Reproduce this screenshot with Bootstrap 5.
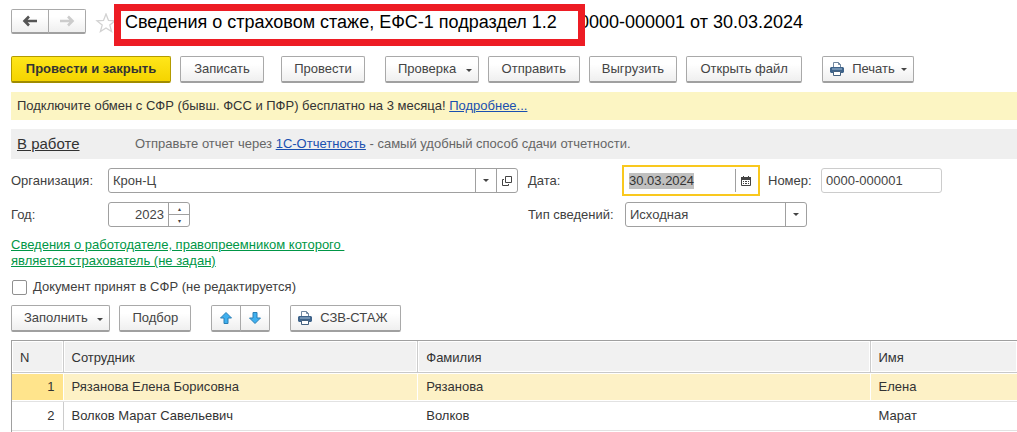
<!DOCTYPE html>
<html lang="ru">
<head>
<meta charset="utf-8">
<meta name="viewport" content="width=device-width, initial-scale=1">
<title>Сведения о страховом стаже, ЕФС-1</title>
<link href="https://cdn.jsdelivr.net/npm/bootstrap@5.3.0/dist/css/bootstrap.min.css" rel="stylesheet">
<style>
  body { font-family: "Liberation Sans", Arial, sans-serif; font-size: 13px; line-height: 16px; color: #404040; background: #fff; }
  .page { padding: 4px 0 0 11px; min-height: 100vh; }
  .btn { --bs-btn-font-size: 13px; --bs-btn-line-height: 16px; --bs-btn-padding-x: 12px; --bs-btn-padding-y: 4px; --bs-btn-border-radius: 2px;
    --bs-btn-color: #444; --bs-btn-border-color: #a9a9a9; --bs-btn-hover-border-color: #888; height: 27px; white-space: nowrap;
    background: linear-gradient(#fff 30%, #efefef); border-bottom: 2px solid #a0a0a0; }
  .btn-main { --bs-btn-color: #333; --bs-btn-border-color: #b39b00; font-weight: bold; background: linear-gradient(#ffe61a, #f5d400); border-bottom-color: #a08c00; min-width: 160px; }
  .btn-nav { height: 25px; width: 38px; --bs-btn-padding-x: 0px; }
  .btn-arrow { width: 30px; --bs-btn-padding-x: 0px; }
  .btn-icon { --bs-btn-padding-x: 7px; }
  .has-caret { padding-right: 6px; }
  .commands { column-gap: 9px; margin-top: 10px; }
  .set-apart { margin-left: 11px; }
  .w-84 { min-width: 84px; }
  .w-92 { min-width: 92px; }
  .w-116 { min-width: 116px; }
  .w-97 { min-width: 97px; }
  .w-111 { min-width: 111px; }
  .tri { width: 0; height: 0; border: 3px solid transparent; border-top-color: #444; border-bottom: 0; display: inline-block; vertical-align: 1px; margin-left: 6px; }
  .form-box .tri { margin: 0; }
  svg { display: block; }
  h1 { font-size: 18px; line-height: 36px; color: #000; }
  .marked { padding: 0 13px 0 11px; min-width: 471px; margin-right: -6px; position: relative; height: 42px; }
  .marked::after { content: ""; position: absolute; inset: 0; border: 7px solid #ed1c24; z-index: 1; }
  .promo { background: #fcf5c3; padding: 6px; margin-top: 9px; color: #333; }
  .status { background: #efefef; padding: 5px 6px; margin-top: 9px; color: #666; line-height: 20px; }
  .status-link { font-size: 15px; color: #333; width: 118px; }
  .blue { color: #1a50b0; }
  .green { color: #009646; }
  .fields { grid-template-columns: minmax(0, 507fr) minmax(0, 489fr); column-gap: 10px; row-gap: 9px; margin-top: 9px; }
  .lab { width: 97px; flex: none; }
  .form-box { height: 25px; border: 1px solid #a0a0a0; border-radius: 3px; background: #fff; }
  .form-box input, .form-box select { border: 0; outline: 0; background: none; padding: 0 4px; color: #444; min-width: 0; font-size: 13px; appearance: none; }
  .form-box button { border: 0; border-left: 1px solid #a0a0a0; background: none; padding: 0; width: 21px; flex: none; display: flex; align-items: center; justify-content: center; }
  .year { width: 82px; }
  .spin { width: 21px; flex: none; border-left: 1px solid #a0a0a0; }
  .form-box .spin button { border-left: 0; width: 20px; flex: 1; font-size: 6px; line-height: 6px; color: #444; }
  .form-box .spin button + button { border-top: 1px solid #a0a0a0; }
  .date-box { height: 31px; margin: -3px 0; border: 2px solid #f9c81e; border-radius: 0; padding: 2px; width: 138px; }
  .date-box input { padding: 0 3px; }
  .date-box input::selection { background: #c0c0c0; color: #333; }
  .num-box { width: 121px; border-color: #ccc; }
  .type-box { width: 182px; }
  .type-mark { position: absolute; right: 0; top: 0; bottom: 0; width: 21px; border-left: 1px solid #a0a0a0; pointer-events: none; }
  .check-box { width: 15px; height: 15px; margin: 0 6px 0 1px; border: 1px solid #909090; border-radius: 2px; appearance: none; background: #fff; }
  .grid-wrap { border-left: 1px solid #a0a0a0; border-top: 1px solid #a0a0a0; margin-top: 8px; }
  .staff { --bs-table-bg: transparent; margin: 0; table-layout: fixed; width: 100%; color: #333; }
  .staff > :not(caption) > * > * { padding: 6px 8px; border: 0 solid #ccc; border-left-width: 1px; background-clip: padding-box; color: #333; height: 29px; }
  .staff > :not(caption) > * > :first-child { border-left-width: 0; }
  .staff > thead > tr > th { font-weight: normal; height: 31px; background: #f1f1f1; border-bottom: 1px solid #c8c8c8; box-shadow: inset 0 0 0 1px #fff; }
  .staff > tbody > tr > td { border-bottom: 1px solid #e2e2e2; }
  .staff > tbody > tr > td:nth-child(n+3) { border-left-color: #fff; }
  .staff > tbody > .picked > td { background: #fdf1c6; border-left-color: #fff; box-shadow: inset 0 1px #fff, inset 0 -1px #fff; }
  .staff > tbody > .picked > td:first-child { background: #ffe48c; }
</style>
</head>
<body>
<main class="page d-flex flex-column">
  <header class="d-flex align-items-center">
    <div class="btn-group mb-2">
      <button class="btn btn-nav d-flex align-items-center justify-content-center" aria-label="Назад"><svg width="16" height="12" viewBox="0 0 16 12"><path d="M7 1.500 2.500 6 7 10.500M2 6h13" fill="none" stroke="#555" stroke-width="2.6"/></svg></button>
      <button class="btn btn-nav d-flex align-items-center justify-content-center" aria-label="Вперед"><svg width="16" height="12" viewBox="0 0 16 12"><path d="M9 1.500 13.500 6 9 10.500M14 6H1" fill="none" stroke="#ccc" stroke-width="2.6"/></svg></button>
    </div>
    <svg class="flex-shrink-0 mb-1" style="margin-left:9px" width="19" height="20" viewBox="0 0 19 20"><path d="m11 1 2.500 6.500 6.500.4-5.200 4.200 1.800 6.400-5.600-3.600-5.600 3.600 1.800-6.400L2 7.900l6.500-.4z" fill="none" stroke="#d2d2d2" stroke-width="1.300"/></svg>
    <h1 class="d-flex mb-0 fw-normal text-nowrap"><span class="marked">Сведения о страховом стаже, ЕФС-1 подраздел 1.2</span><span>0000-000001 от 30.03.2024</span></h1>
  </header>

  <div class="commands d-flex">
    <button class="btn btn-main">Провести и закрыть</button>
    <button class="btn w-84">Записать</button>
    <button class="btn w-84 ms-2">Провести</button>
    <button class="btn w-92 set-apart has-caret">Проверка <i class="tri"></i></button>
    <button class="btn w-92">Отправить</button>
    <button class="btn">Выгрузить</button>
    <button class="btn w-116">Открыть файл</button>
    <button class="btn btn-icon set-apart has-caret d-flex align-items-center"><svg class="me-2" width="14" height="14" viewBox="0 0 14 14"><path d="M3.500 5V.5h5l2 2V5M8.500.5v2h2" fill="#fff" stroke="#7288a0"/><path d="M1 5h12l1 1v4l-1 1H1l-1-1V6z" fill="#3f648b"/><path d="M2 7h10" stroke="#a5bfd8"/><path d="M3.500 9.500h7v4h-7z" fill="#fff" stroke="#45617f"/></svg>Печать <i class="tri"></i></button>
  </div>

  <div class="promo">Подключите обмен с СФР (бывш. ФСС и ПФР) бесплатно на 3 месяца! <a class="blue" href="#">Подробнее...</a></div>
  <div class="status d-flex"><a class="status-link" href="#">В работе</a><span>Отправьте отчет через <a class="blue" href="#">1С-Отчетность</a> - самый удобный способ сдачи отчетности.</span></div>

  <form class="fields d-grid">
    <div class="d-flex align-items-center">
      <label class="lab" for="org">Организация:</label>
      <div class="form-box d-flex flex-grow-1"><input class="flex-grow-1" id="org" value="Крон-Ц"><button type="button" aria-label="Выбрать"><i class="tri"></i></button><button type="button" aria-label="Открыть"><svg width="10" height="10" viewBox="0 0 10 10"><path d="M3.500.5h6v6h-6zM2 3.500H.5v6h6V8" fill="none" stroke="#444"/></svg></button></div>
    </div>
    <div class="d-flex align-items-center">
      <label for="date" style="width:94px">Дата:</label>
      <div class="form-box date-box d-flex"><input class="flex-grow-1" id="date" value="30.03.2024"><button type="button" aria-label="Календарь"><svg width="10" height="10" viewBox="0 0 10 10"><path d="M.5 1.500h9v8h-9z" fill="none" stroke="#444"/><path d="M0 1h10v3H0zM2 0h1v2H2zM7 0h1v2H7zM2 5h1v1H2zM4 5h2v1H4zM7 5h1v1H7zM2 7h1v1H2zM4 7h2v1H4zM7 7h1v1H7z" fill="#444"/></svg></button></div>
      <label class="ms-2" for="num" style="width:53px">Номер:</label>
      <div class="form-box num-box d-flex"><input class="w-100" id="num" value="0000-000001" readonly></div>
    </div>
    <div class="d-flex align-items-center">
      <label class="lab" for="year">Год:</label>
      <div class="form-box year d-flex"><input class="flex-grow-1 text-end w-50" id="year" value="2023"><div class="spin d-flex flex-column"><button type="button" aria-label="Больше">▴</button><button type="button" aria-label="Меньше">▾</button></div></div>
    </div>
    <div class="d-flex align-items-center">
      <label class="lab" for="type">Тип сведений:</label>
      <div class="form-box type-box position-relative d-flex"><select class="w-100" id="type"><option>Исходная</option></select><span class="type-mark d-flex align-items-center justify-content-center"><i class="tri"></i></span></div>
    </div>
  </form>

  <div style="margin-top:10px"><a class="green" href="#">Сведения о работодателе, правопреемником которого&nbsp;<br>является страхователь (не задан)</a></div>
  <div class="d-flex align-items-center" style="margin-top:10px"><input type="checkbox" class="check-box" id="accepted"><label for="accepted">Документ принят в СФР (не редактируется)</label></div>

  <div class="commands d-flex">
    <button class="btn has-caret w-97">Заполнить <i class="tri"></i></button>
    <button class="btn">Подбор</button>
    <div class="btn-group set-apart">
      <button class="btn btn-arrow d-flex align-items-center justify-content-center" aria-label="Вверх"><svg width="12" height="12" viewBox="0 0 12 12"><path d="m6 .5 5.500 5.500H8v5.500H4V6H.5z" fill="#3fb0ef" stroke="#2a7fb5"/></svg></button>
      <button class="btn btn-arrow d-flex align-items-center justify-content-center" aria-label="Вниз"><svg width="12" height="12" viewBox="0 0 12 12"><path d="M6 11.500.5 6H4V.5h4V6h3.500z" fill="#3fb0ef" stroke="#2a7fb5"/></svg></button>
    </div>
    <button class="btn btn-icon set-apart w-111 d-flex align-items-center"><svg class="me-2" width="14" height="14" viewBox="0 0 14 14"><path d="M3.500 5V.5h5l2 2V5M8.500.5v2h2" fill="#fff" stroke="#7288a0"/><path d="M1 5h12l1 1v4l-1 1H1l-1-1V6z" fill="#3f648b"/><path d="M2 7h10" stroke="#a5bfd8"/><path d="M3.500 9.500h7v4h-7z" fill="#fff" stroke="#45617f"/></svg>СЗВ-СТАЖ</button>
  </div>

  <div class="grid-wrap flex-grow-1">
    <table class="table staff">
      <colgroup><col style="width:51px"><col style="width:35.300%"><col style="width:45%"><col></colgroup>
      <thead><tr><th>N</th><th>Сотрудник</th><th>Фамилия</th><th>Имя</th></tr></thead>
      <tbody>
        <tr class="picked"><td class="text-end">1</td><td>Рязанова Елена Борисовна</td><td>Рязанова</td><td>Елена</td></tr>
        <tr><td class="text-end">2</td><td>Волков Марат Савельевич</td><td>Волков</td><td>Марат</td></tr>
      </tbody>
    </table>
  </div>
</main>
<script src="https://cdn.jsdelivr.net/npm/bootstrap@5.3.0/dist/js/bootstrap.bundle.min.js"></script>
<script>
  const dateInput = document.getElementById('date');
  dateInput.focus();
  dateInput.select();
</script>
</body>
</html>
